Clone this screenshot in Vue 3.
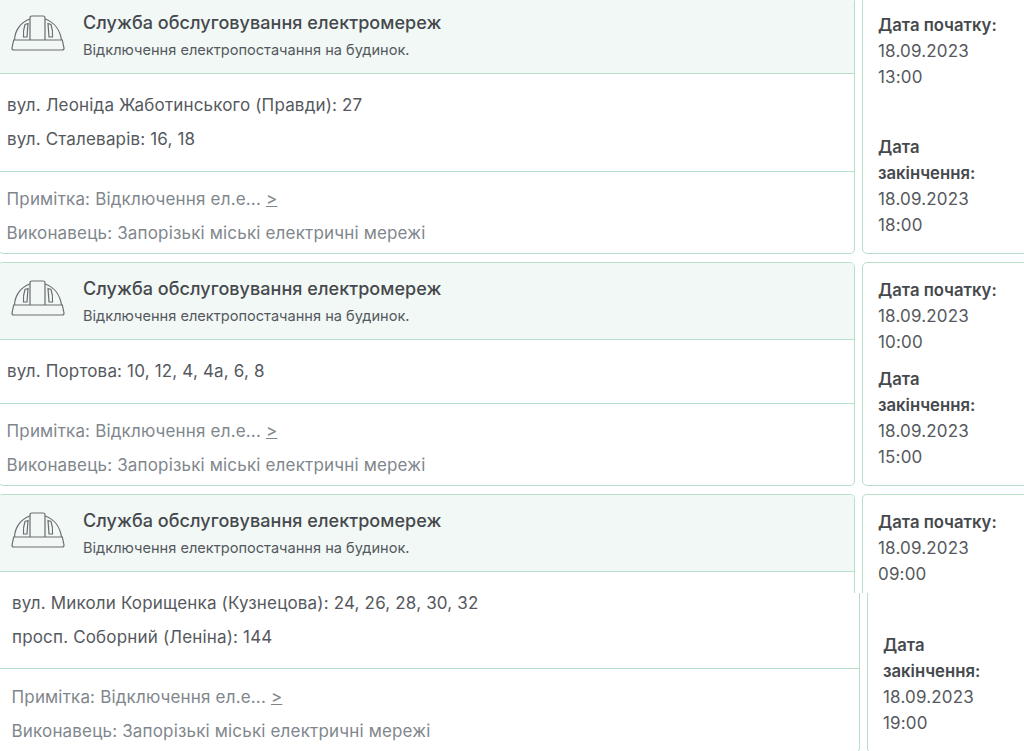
<script setup>
const rows = [
  { id: 1, lines: ['вул. Леоніда Жаботинського (Правди): 27', 'вул. Сталеварів: 16, 18'], start: '13:00', end: '18:00' },
  { id: 2, lines: ['вул. Портова: 10, 12, 4, 4а, 6, 8'], start: '10:00', end: '15:00' }
]
const title = 'Служба обслуговування електромереж'
const subtitle = 'Відключення електропостачання на будинок.'
const date = '18.09.2023'
const note = 'Примітка: Відключення ел.е...'
const executor = 'Виконавець: Запорізькі міські електричні мережі'
const helmet = [
  'M2.7 26 L1 34 Q.8 36 3 36 H51 Q53.2 36 53 34 L51.3 26 Z',
  'M3.5 26 C4 16 10 8 19 5',
  'M34 5 C43 8 49 16 50.5 26',
  'M19 26 V4 Q19 2 21 2 H32 Q34 2 34 4 V26',
  'M12.5 23 H16 L17 9.5 L14 10.5 Q12 16 12.5 23 Z',
  'M41.5 23 H38 L37 9.5 L40 10.5 Q42 16 41.5 23 Z'
]
</script>

<template>
  <div class="page">
    <div v-for="r in rows" :key="r.id" class="row">
      <section class="card left">
        <header class="head">
          <svg class="helmet" width="54" height="37" viewBox="0 0 54 37">
            <path v-for="d in helmet" :key="d" :d="d" />
          </svg>
          <div>
            <div class="title">{{ title }}</div>
            <div class="sub">{{ subtitle }}</div>
          </div>
        </header>
        <div class="body">
          <p v-for="l in r.lines" :key="l">{{ l }}</p>
        </div>
        <footer class="foot">
          <p>{{ note }} <u>&gt;</u></p>
          <p>{{ executor }}</p>
        </footer>
      </section>
      <aside class="card right">
        <div class="block">
          <b>Дата початку:</b>
          <div>{{ date }}</div>
          <div>{{ r.start }}</div>
        </div>
        <div class="block">
          <b>Дата закінчення:</b>
          <div>{{ date }}</div>
          <div>{{ r.end }}</div>
        </div>
      </aside>
    </div>

    <div class="row seg-top">
      <section class="card left open-bottom">
        <header class="head">
          <svg class="helmet" width="54" height="37" viewBox="0 0 54 37">
            <path v-for="d in helmet" :key="d" :d="d" />
          </svg>
          <div>
            <div class="title">{{ title }}</div>
            <div class="sub">{{ subtitle }}</div>
          </div>
        </header>
      </section>
      <aside class="card right open-bottom">
        <div class="block">
          <b>Дата початку:</b>
          <div>{{ date }}</div>
          <div>09:00</div>
        </div>
      </aside>
    </div>
    <div class="row seg-bottom">
      <section class="card left open-top">
        <div class="body">
          <p>вул. Миколи Корищенка (Кузнецова): 24, 26, 28, 30, 32</p>
          <p>просп. Соборний (Леніна): 144</p>
        </div>
        <footer class="foot">
          <p>{{ note }} <u>&gt;</u></p>
          <p>{{ executor }}</p>
        </footer>
      </section>
      <aside class="card right open-top">
        <div class="block">
          <b>Дата закінчення:</b>
          <div>{{ date }}</div>
          <div>19:00</div>
        </div>
      </aside>
    </div>
  </div>
</template>

<style scoped>
.page {
  width: 1024px;
  height: 751px;
  overflow: hidden;
  font-family: Inter, "Noto Sans", sans-serif;
  font-size: 17px;
  letter-spacing: 0.17px;
  line-height: 26px;
  color: #55595e;
}
.row {
  display: grid;
  grid-template-columns: 857px 200px;
  column-gap: 7px;
  margin: 0 0 8px -2px;
}
.row:first-child {
  margin-top: -3px;
}
.card {
  box-sizing: border-box;
  border: 1px solid #b7dfca;
  border-radius: 5px;
  background: #fff;
}
.left {
  display: flex;
  flex-direction: column;
}
.head {
  position: relative;
  flex: none;
  box-sizing: border-box;
  height: 77px;
  padding: 14px 0 0 84px;
  background: #f2f8f6;
  border-bottom: 1px solid #b7dfca;
  border-radius: 4px 4px 0 0;
}
.row:first-child .head {
  height: 76px;
  padding-top: 13px;
}
.helmet {
  position: absolute;
  left: 12px;
  top: 16px;
  fill: none;
  stroke: #6a6d70;
  stroke-width: 1.2;
}
.title {
  font-size: 18px;
  font-weight: 500;
  letter-spacing: 0.05px;
  line-height: 24px;
  color: #45494d;
}
.sub {
  font-size: 14.6px;
  letter-spacing: 0;
  line-height: 20px;
  margin-top: 5px;
}
.body {
  padding: 18px 0 11px 8px;
  border-bottom: 1px solid #b7dfca;
}
p {
  margin: 0 0 8px;
}
.foot {
  box-sizing: border-box;
  height: 81px;
  padding: 14px 0 0 7.5px;
  color: #7f878d;
}
.right {
  display: flex;
  flex-direction: column;
  justify-content: space-between;
  padding: 14px 0 15px 15px;
}
.block {
  width: 125px;
}
b {
  display: block;
  font-size: 16.7px;
  letter-spacing: 0;
  font-weight: 600;
  color: #45494d;
}
.seg-top {
  height: 99px;
  margin-bottom: 0;
  overflow: hidden;
}
.seg-bottom {
  height: 160px;
  margin-bottom: 0;
  grid-template-columns: 862px 200px;
  grid-template-rows: 160px;
}
.seg-bottom .body {
  margin-top: -3px;
  padding: 0 0 10px 13px;
}
.seg-bottom .foot {
  height: 0;
  flex: 1;
  padding: 15px 0 0 12.5px;
}
.seg-bottom .right {
  justify-content: flex-end;
  padding-bottom: 16px;
}
.open-bottom {
  height: 99px;
  border-bottom: 0;
  border-radius: 5px 5px 0 0;
}
.open-top {
  border-top: 0;
  border-radius: 0 0 5px 5px;
}
</style>

<style>
html, body {
  margin: 0;
  overflow: hidden;
  background: #fff;
}
</style>
